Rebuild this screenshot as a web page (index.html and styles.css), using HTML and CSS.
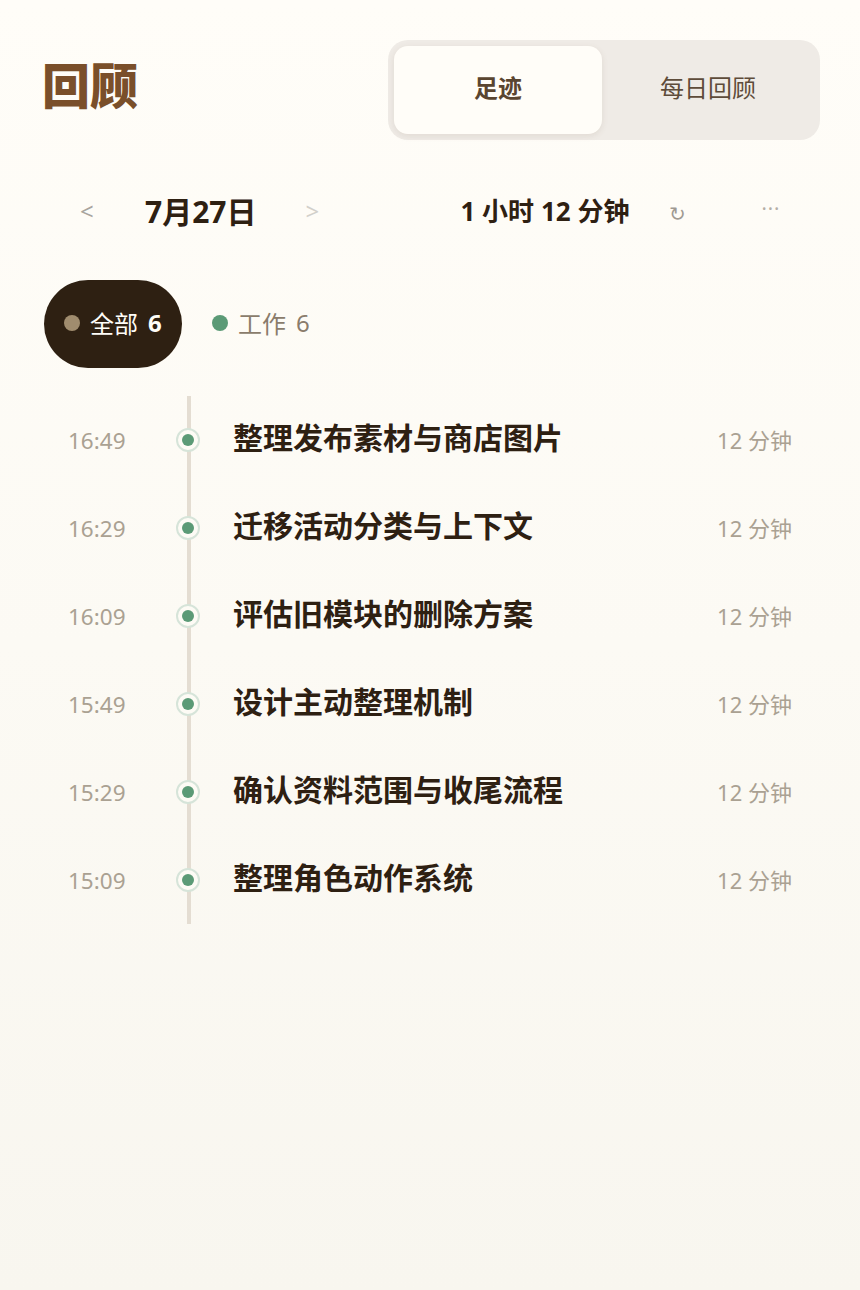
FILE: index.html
```html
<!DOCTYPE html>
<html lang="zh-CN">
<head>
<meta charset="utf-8">
<link rel="stylesheet" href="styles.css">
</head>
<body>
<div class="page">
  <header class="header">
    <h1 class="title">回顾</h1>
    <div class="seg">
      <div class="seg-item active">足迹</div>
      <div class="seg-item">每日回顾</div>
    </div>
  </header>

  <div class="daterow">
    <span class="arrow prev">&lt;</span>
    <span class="date">7月27日</span>
    <span class="arrow next">&gt;</span>
    <span class="total">1 小时 12 分钟</span>
    <span class="refresh">↻</span>
    <span class="more">···</span>
  </div>

  <div class="filters">
    <div class="chip selected"><span class="dot tan"></span>全部<span class="num">6</span></div>
    <div class="chip"><span class="dot green"></span>工作<span class="num">6</span></div>
  </div>

  <div class="timeline">
    <div class="row"><span class="time">16:49</span><span class="node"><span class="core"></span></span><span class="name">整理发布素材与商店图片</span><span class="dur">12 分钟</span></div>
    <div class="row"><span class="time">16:29</span><span class="node"><span class="core"></span></span><span class="name">迁移活动分类与上下文</span><span class="dur">12 分钟</span></div>
    <div class="row"><span class="time">16:09</span><span class="node"><span class="core"></span></span><span class="name">评估旧模块的删除方案</span><span class="dur">12 分钟</span></div>
    <div class="row"><span class="time">15:49</span><span class="node"><span class="core"></span></span><span class="name">设计主动整理机制</span><span class="dur">12 分钟</span></div>
    <div class="row"><span class="time">15:29</span><span class="node"><span class="core"></span></span><span class="name">确认资料范围与收尾流程</span><span class="dur">12 分钟</span></div>
    <div class="row"><span class="time">15:09</span><span class="node"><span class="core"></span></span><span class="name">整理角色动作系统</span><span class="dur">12 分钟</span></div>
  </div>
</div>
</body>
</html>
```

FILE: styles.css
```css
* { box-sizing: border-box; }
html, body { margin: 0; padding: 0; }
body {
  width: 860px;
  min-height: 1290px;
  background: linear-gradient(180deg, #fffdf8 0%, #fcfaf4 50%, #f8f6ef 100%);
  font-family: "Noto Sans", "Noto Sans CJK SC", sans-serif;
  color: #2e2012;
}
.page { padding: 40px 40px 0 42px; }

.header {
  display: flex;
  justify-content: space-between;
  align-items: center;
  height: 100px;
}
.title {
  margin: 0 0 14px 0;
  font-family: "Noto Sans CJK SC", sans-serif;
  font-weight: 900;
  font-size: 48px;
  line-height: 1;
  color: #7a4f2a;
}
.seg {
  display: flex;
  width: 432px;
  height: 100px;
  padding: 6px;
  background: #efebe6;
  border-radius: 20px;
}
.seg-item {
  flex: 1;
  display: flex;
  align-items: center;
  justify-content: center;
  padding-bottom: 8px;
  font-family: "Noto Sans CJK SC", sans-serif;
  font-size: 24px;
  color: #5e4c3a;
  border-radius: 14px;
}
.seg-item.active {
  flex: 0 0 208px;
  background: #fffdf8;
  font-weight: 700;
  color: #5a4530;
  box-shadow: 0 2px 6px rgba(120, 100, 70, 0.12);
}

.daterow {
  display: flex;
  align-items: center;
  height: 60px;
  margin-top: 42px;
  padding-left: 38px;
  padding-bottom: 4px;
}
.arrow {
  font-family: "Noto Sans", sans-serif;
  font-size: 24px;
  color: #a8a49e;
  width: 20px;
}
.arrow.next { color: #d2d0cb; margin-left: 49px; }
.date {
  font-family: "Noto Sans", "Noto Sans CJK SC", sans-serif;
  font-weight: 700;
  font-size: 30px;
  color: #2e2012;
  margin-left: 45px;
}
.total {
  font-family: "Noto Sans", "Noto Sans CJK SC", sans-serif;
  font-weight: 700;
  font-size: 26px;
  color: #2e2012;
  margin-left: 135px;
}
.refresh {
  font-size: 20px;
  color: #a09a92;
  margin-left: 40px;
  margin-top: 6px;
}
.more {
  font-size: 20px;
  color: #b4aea6;
  margin-left: 75px;
  margin-top: -4px;
  letter-spacing: 1px;
}

.filters {
  display: flex;
  align-items: center;
  gap: 28px;
  margin-top: 38px;
  padding-left: 2px;
}
.chip {
  display: flex;
  align-items: center;
  height: 88px;
  padding-bottom: 4px;
  font-family: "Noto Sans", "Noto Sans CJK SC", sans-serif;
  font-size: 24px;
  color: #8a7c6c;
}
.chip.selected {
  background: #2e2012;
  color: #fffdf8;
  border-radius: 44px;
  padding: 0 20px 4px 20px;
  width: 138px;
}
.chip .num { margin-left: 10px; }
.chip.selected .num { font-weight: 700; }
.dot {
  width: 16px;
  height: 16px;
  border-radius: 50%;
  margin-right: 10px;
  margin-top: 2px;
}
.dot.tan { background: #a08c6e; }
.dot.green { background: #5b9a76; margin-left: 2px; }

.timeline {
  position: relative;
  margin-top: 28px;
}
.timeline::before {
  content: "";
  position: absolute;
  left: 145px;
  top: 0;
  bottom: 0;
  width: 4px;
  background: #e4ddd2;
}
.row {
  position: relative;
  display: flex;
  align-items: center;
  height: 88px;
}
.time {
  width: 134px;
  padding-left: 26px;
  font-family: "Noto Sans", sans-serif;
  font-size: 22.5px;
  color: #aaa192;
}
.node {
  width: 24px;
  height: 24px;
  border-radius: 50%;
  background: #fdfbf5;
  border: 2px solid #d6e4d9;
  display: flex;
  align-items: center;
  justify-content: center;
  z-index: 1;
}
.core {
  width: 12px;
  height: 12px;
  border-radius: 50%;
  background: #5b9a76;
}
.name {
  flex: 1;
  margin-left: 33px;
  padding-bottom: 8px;
  font-family: "Noto Sans CJK SC", sans-serif;
  font-weight: 700;
  font-size: 30px;
  color: #2e2012;
}
.dur {
  font-family: "Noto Sans", "Noto Sans CJK SC", sans-serif;
  font-size: 22px;
  color: #aaa192;
  margin-right: 28px;
  padding-bottom: 3px;
}
```
